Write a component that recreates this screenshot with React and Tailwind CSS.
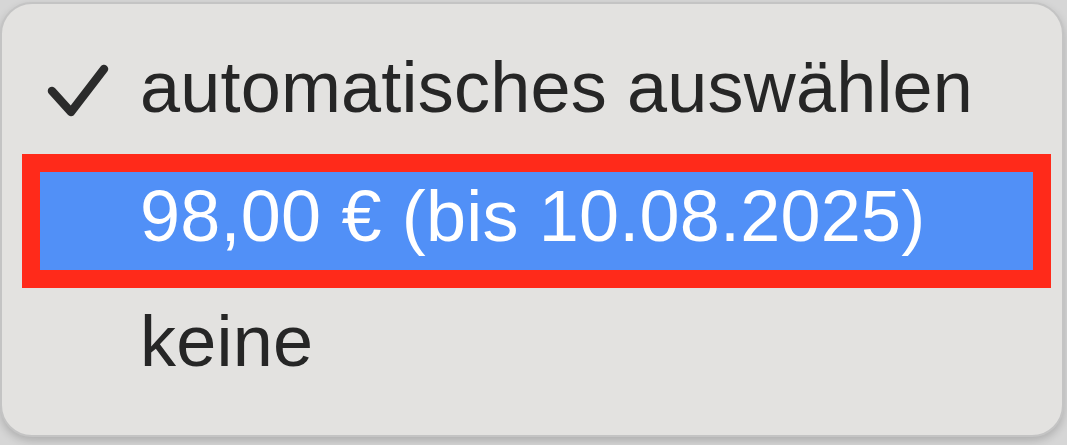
import React from "react";

function Check() {
  return (
    <svg width="66" height="60" viewBox="0 0 66 60" className="shrink-0">
      <path d="M6 28 L25 49 L58 6" fill="none" stroke="#2b2b2b" strokeWidth="8.5" strokeLinecap="round" strokeLinejoin="round" />
    </svg>
  );
}

export default function App() {
  return (
    <div className="relative w-[1067px] h-[445px] overflow-hidden bg-[#d6d6d6]" style={{ fontFamily: '"Liberation Sans", Arial, sans-serif' }}>
      <div className="relative z-10 mt-[2px] w-[1064px] h-[435px] rounded-[32px] border-2 border-[#c4c4c4] bg-[#e3e2e0] shadow-[0_4px_8px_rgba(0,0,0,0.18)] pt-[28px] text-[72px] leading-none tracking-[0.2px]">
        <div className="h-[126px] flex items-center">
          <div className="w-[138px] flex items-center pl-[44px] pb-[4px]">
            <Check />
          </div>
          <span className="text-[#262626] pb-[16px]">automatisches auswählen</span>
        </div>
        <div className="h-[126px] flex items-center">
          <div className="ml-[38px] mr-[29px] flex-1 h-[98px] bg-[#5190f7] outline-[18px] outline-solid outline-[#ff2a1a] flex items-center pl-[100px]">
            <span className="text-white pb-[10px]">98,00 € (bis 10.08.2025)</span>
          </div>
        </div>
        <div className="h-[126px] flex items-center">
          <span className="pl-[138px] text-[#262626] pb-[12px]">keine</span>
        </div>
      </div>
    </div>
  );
}
